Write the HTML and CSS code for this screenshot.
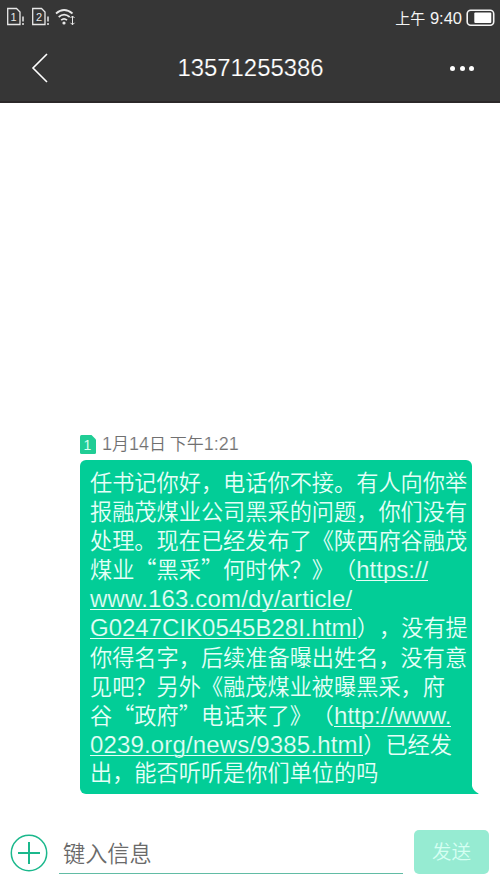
FILE: index.html
```html
<!DOCTYPE html>
<html lang="zh-CN">
<head>
<meta charset="utf-8">
<title>13571255386</title>
<link rel="stylesheet" href="styles.css">
</head>
<body>
<header class="top">
  <div class="status">
    <svg class="status-icons" width="80" height="36" viewBox="0 0 80 36" fill="none" stroke="#e8e8e8" stroke-width="1.3">
      <path d="M7.700 8.500H16.500L20 12V24.500H7.700Z"/>
      <path d="M32.700 8.500H41.500L45 12V24.500H32.700Z"/>
      <path d="M23 16.500V21.500M23 23V25M48 16.500V21.500M48 23V25" stroke-width="1.500"/>
      <path d="M56 13.500Q64 6.500 72.500 13.500M58.700 17Q64 12.200 69.700 17M61.200 20.200Q64 17.500 67 20.200" stroke-width="1.700"/>
      <circle cx="64" cy="23" r="1.600" fill="#e8e8e8" stroke="none"/>
      <path d="M72.500 16V24.800M70.500 18L72.500 16L74.500 18M70.500 22.800L72.500 24.800L74.500 22.800" stroke-width="1"/>
      <text class="sim-number" x="13.500" y="20.500">1</text>
      <text class="sim-number" x="39" y="20.500">2</text>
    </svg>
    <div class="clock"><span class="cjk-clock">上午</span> 9:40</div>
    <svg class="battery" width="30" height="18" viewBox="0 0 30 18">
      <rect x="1.200" y="1.200" width="26.500" height="15" rx="3.500" fill="none" stroke="#f4f4f4" stroke-width="1.600"/>
      <rect x="8.300" y="3.500" width="17" height="10.500" rx="1" fill="#fff"/>
    </svg>
  </div>
  <nav class="bar">
    <svg class="back" width="18" height="32" viewBox="0 0 18 32"><path d="M16 2L2 16L16 30" fill="none" stroke="#fff" stroke-width="1.600"/></svg>
    <h1>13571255386</h1>
    <div class="more"><i></i><i></i><i></i></div>
  </nav>
</header>
<main class="thread">
  <div class="stamp">
    <svg width="16" height="19" viewBox="0 0 16 19"><path d="M1.500 0H11.500L16 4.500V17.500Q16 19 14.500 19H1.500Q0 19 0 17.500V1.500Q0 0 1.500 0Z" fill="#20cd95"/><text class="badge-number" x="7.500" y="15">1</text></svg>
    <span><b>1</b>月<b>14</b>日 下午<b>1:21</b></span>
  </div>
  <div class="bubble">
    <p>任书记你好，电话你不接。有人向你举</p>
    <p>报融茂煤业公司黑采的问题，你们没有</p>
    <p>处理。现在已经发布了《陕西府谷融茂</p>
    <p>煤业“黑采”何时休？》（<a>https://</a></p>
    <p><a class="wide">www.163.com/dy/article/</a></p>
    <p><a>G0247CIK0545B28I.html</a>），没有提</p>
    <p>你得名字，后续准备曝出姓名，没有意</p>
    <p>见吧？另外《融茂煤业被曝黑采，府</p>
    <p>谷“政府”电话来了》（<a>http://www.</a></p>
    <p><a class="wide">0239.org/news/9385.html</a>）已经发</p>
    <p>出，能否听听是你们单位的吗</p>
    <svg class="tail" width="7" height="8" viewBox="0 0 7 8"><path d="M0 0Q1 5 6.500 7.500V8H0Z" fill="#02cd97"/></svg>
  </div>
</main>
<footer class="composer">
  <svg class="add" width="38" height="38" viewBox="0 0 38 38" fill="none" stroke="#1bb88c"><circle cx="19" cy="19" r="17.700" stroke-width="1.500"/><path d="M8 19H30M19 8V30" stroke-width="2"/></svg>
  <div class="field">键入信息</div>
  <div class="send">发送</div>
</footer>
</body>
</html>
```
FILE: styles.css
```css
* { box-sizing: border-box; }
body {
  margin: 0;
  width: 500px;
  height: 888px;
  display: flex;
  flex-direction: column;
  overflow: hidden;
  background: #fff;
  font-family: "Noto Sans CJK SC", sans-serif;
  font-weight: 350;
  text-spacing-trim: space-all;
}
.top {
  height: 103px;
  flex: none;
  background: #363636;
  border-bottom: 2px solid #2b2829;
}
.status {
  height: 36px;
  display: flex;
  align-items: center;
  padding-right: 4px;
}
.status-icons { margin-right: auto; }
.sim-number, .badge-number {
  font-family: "Liberation Sans", sans-serif;
  font-size: 11px;
  text-anchor: middle;
  fill: #e8e8e8;
  stroke: none;
}
.badge-number { font-size: 14px; fill: #d8fff0; }
.clock {
  color: #f4f4f4;
  font: 16.5px/36px "Liberation Sans", sans-serif;
  white-space: pre;
  margin-right: 4px;
}
.cjk-clock { font-family: "Noto Sans CJK SC", sans-serif; font-size: 15px; }
.battery { margin-top: -1px; }
.bar {
  height: 64px;
  display: flex;
  align-items: center;
  justify-content: space-between;
  padding: 0 26px 0 31px;
}
h1 {
  margin: 0 0 0 2px;
  color: #fff;
  font: 400 23.9px/64px "Liberation Sans", sans-serif;
  -webkit-text-stroke: .2px #363636;
}
.more { display: flex; gap: 4.5px; }
.more i { width: 5px; height: 5px; border-radius: 50%; background: #fff; }
.thread {
  flex: 1;
  padding: 330px 28px 0 80px;
}
.stamp {
  height: 27px;
  display: flex;
  align-items: flex-start;
  gap: 6px;
  color: #707070;
  font-size: 17px;
  line-height: 22px;
  white-space: pre;
}
.stamp svg { margin-top: 2px; }
.stamp span { margin-top: -1px; }
.stamp b {
  font: 400 18px "Liberation Sans", sans-serif;
  -webkit-text-stroke: .2px #fff;
}
.bubble {
  position: relative;
  width: 392px;
  height: 334px;
  padding: 7px 0 0 10px;
  border-radius: 6px 6px 0 6px;
  background: #02cd97;
  color: #e5fff7;
}
p {
  margin: 0;
  height: 29.1px;
  font-size: 22.2px;
  line-height: 29px;
  white-space: nowrap;
}
p:last-of-type { margin-top: -.6px; }
a {
  font-family: "Liberation Sans", sans-serif;
  font-weight: 400;
  font-size: 24px;
  -webkit-text-stroke: .2px #02cd97;
  background: linear-gradient(#e5fff7, #e5fff7) 0 calc(100% - 2px) / 100% 1px no-repeat;
}
.wide { letter-spacing: .16px; }
.tail { position: absolute; right: -7px; bottom: 0; }
.composer {
  height: 70px;
  flex: none;
  display: flex;
  align-items: flex-start;
  padding: 12px 11px 0 10px;
}
.add { margin-top: 4px; }
.field {
  width: 344px;
  height: 44px;
  margin: 0 11px;
  padding-left: 4px;
  border-bottom: 1px solid #62bca5;
  color: #6a6a6a;
  font-size: 22.2px;
  line-height: 44px;
}
.send {
  flex: 1;
  height: 44px;
  border-radius: 5px;
  background: #96ebd2;
  color: #d5fff2;
  font-size: 19.5px;
  line-height: 41px;
  text-align: center;
}
```
